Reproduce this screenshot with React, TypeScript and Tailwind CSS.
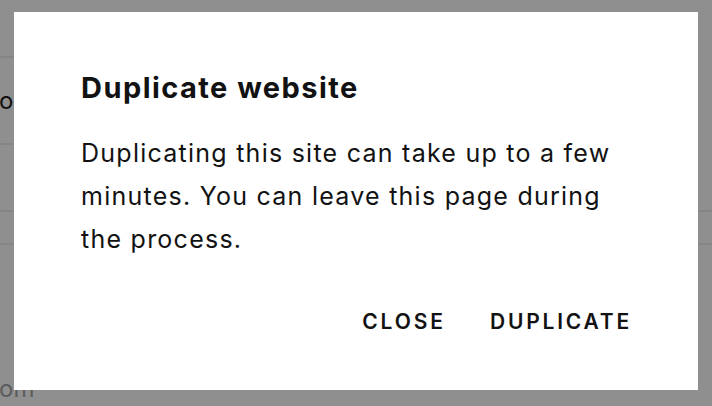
export default function App() {
  return (
    <div className="relative h-[406px] w-[712px] overflow-hidden bg-[#8f8f8f] font-['Inter',sans-serif]">
      {/* page behind the scrim */}
      <div className="flex h-full w-full">
        <div className="flex w-[300px] flex-col">
          <div className="h-[58px] border-b-2 border-[#858585]" />
          <div className="flex h-[87px] items-center border-b-2 border-[#858585]">
            <span className="-ml-[1px] text-[24px] text-[#111]">o</span>
          </div>
          <div className="h-[67px] border-b-2 border-[#858585]" />
          <div className="h-[33px] border-b-2 border-[#858585]" />
          <div className="flex flex-1 items-end">
            <span className="-ml-[1px] mb-[5px] text-[24px] leading-none text-[#5c5c5c]">om</span>
          </div>
        </div>
        <div className="flex flex-1 flex-col">
          <div className="h-[212px] border-b-2 border-[#858585]" />
          <div className="h-[33px] border-b-2 border-[#858585]" />
        </div>
      </div>

      {/* dialog */}
      <div className="absolute left-[14px] top-[12px] flex h-[378px] w-[684px] flex-col bg-white px-[67px] pt-[58px] text-[#121212]">
        <h2 className="text-[29px] font-bold leading-[36px] tracking-[1.45px]">Duplicate website</h2>
        <p className="mt-[26px] text-[25px] leading-[43px] tracking-[1.25px]">
          Duplicating this site can take up to a few minutes. You can leave this page during the process.
        </p>
        <div className="mt-[49px] flex justify-end gap-[44px]">
          <button className="text-[21px] font-semibold uppercase leading-[24px] tracking-[2.9px]">Close</button>
          <button className="-mr-[1px] text-[21px] font-semibold uppercase leading-[24px] tracking-[2.8px]">Duplicate</button>
        </div>
      </div>
    </div>
  );
}
